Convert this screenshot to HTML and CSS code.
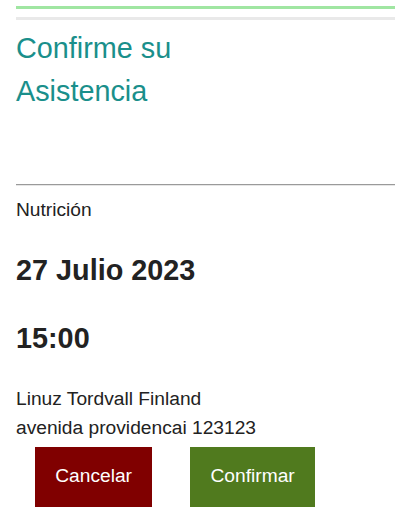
FILE: index.html
```html
<!DOCTYPE html>
<html lang="es">
<head>
<meta charset="utf-8">
<title>Confirme su Asistencia</title>
<link rel="stylesheet" href="styles.css">
</head>
<body>
<div class="page">
  <div class="bar bar-green"></div>
  <div class="bar bar-grey"></div>
  <h1 class="title">Confirme su<br>Asistencia</h1>
  <hr class="divider">
  <p class="category">Nutrición</p>
  <h2 class="big date">27 Julio 2023</h2>
  <h2 class="big time">15:00</h2>
  <p class="address">Linuz Tordvall Finland<br>avenida providencai 123123</p>
  <div class="actions">
    <button class="btn btn-cancel">Cancelar</button>
    <button class="btn btn-confirm">Confirmar</button>
  </div>
</div>
</body>
</html>
```
FILE: styles.css
```css
html, body {
  margin: 0;
  padding: 0;
  background: #ffffff;
}
body {
  font-family: "Liberation Sans", Arial, sans-serif;
  color: #222222;
  font-size: 19.2px;
  line-height: 1.5;
}
.page {
  padding: 6px 10px 0 16px;
}
.bar {
  height: 3px;
}
.bar-green {
  background: #a0e6a2;
  margin-bottom: 8px;
}
.bar-grey {
  background: #e9e9e9;
}
.title {
  margin: 7px 0 0;
  font-size: 28.8px;
  line-height: 1.5;
  font-weight: normal;
  color: #1a8f8b;
}
.divider {
  margin: 70.5px 0 0;
  border: 0;
  border-top: 1px solid #9a9a9a;
  border-bottom: 1px solid #e6e6e6;
  height: 0;
}
.category {
  margin: 9.7px 0 0;
}
.big {
  margin: 24.5px 0 0;
  font-size: 28.8px;
  line-height: 1.5;
  font-weight: bold;
  color: #222222;
}
.time {
  margin-top: 25.2px;
}
.address {
  margin: 24.8px 0 0;
}
.actions {
  display: flex;
  gap: 38.5px;
  padding-left: 19.2px;
  margin-top: 4px;
}
.btn {
  border: 0;
  border-radius: 0;
  padding: 15.5px 20px;
  font-family: "Liberation Sans", Arial, sans-serif;
  font-size: 19.2px;
  line-height: 1.5;
  color: #ffffff;
  cursor: pointer;
}
.btn-cancel {
  background: #800000;
}
.btn-confirm {
  background: #507a1e;
}
```
